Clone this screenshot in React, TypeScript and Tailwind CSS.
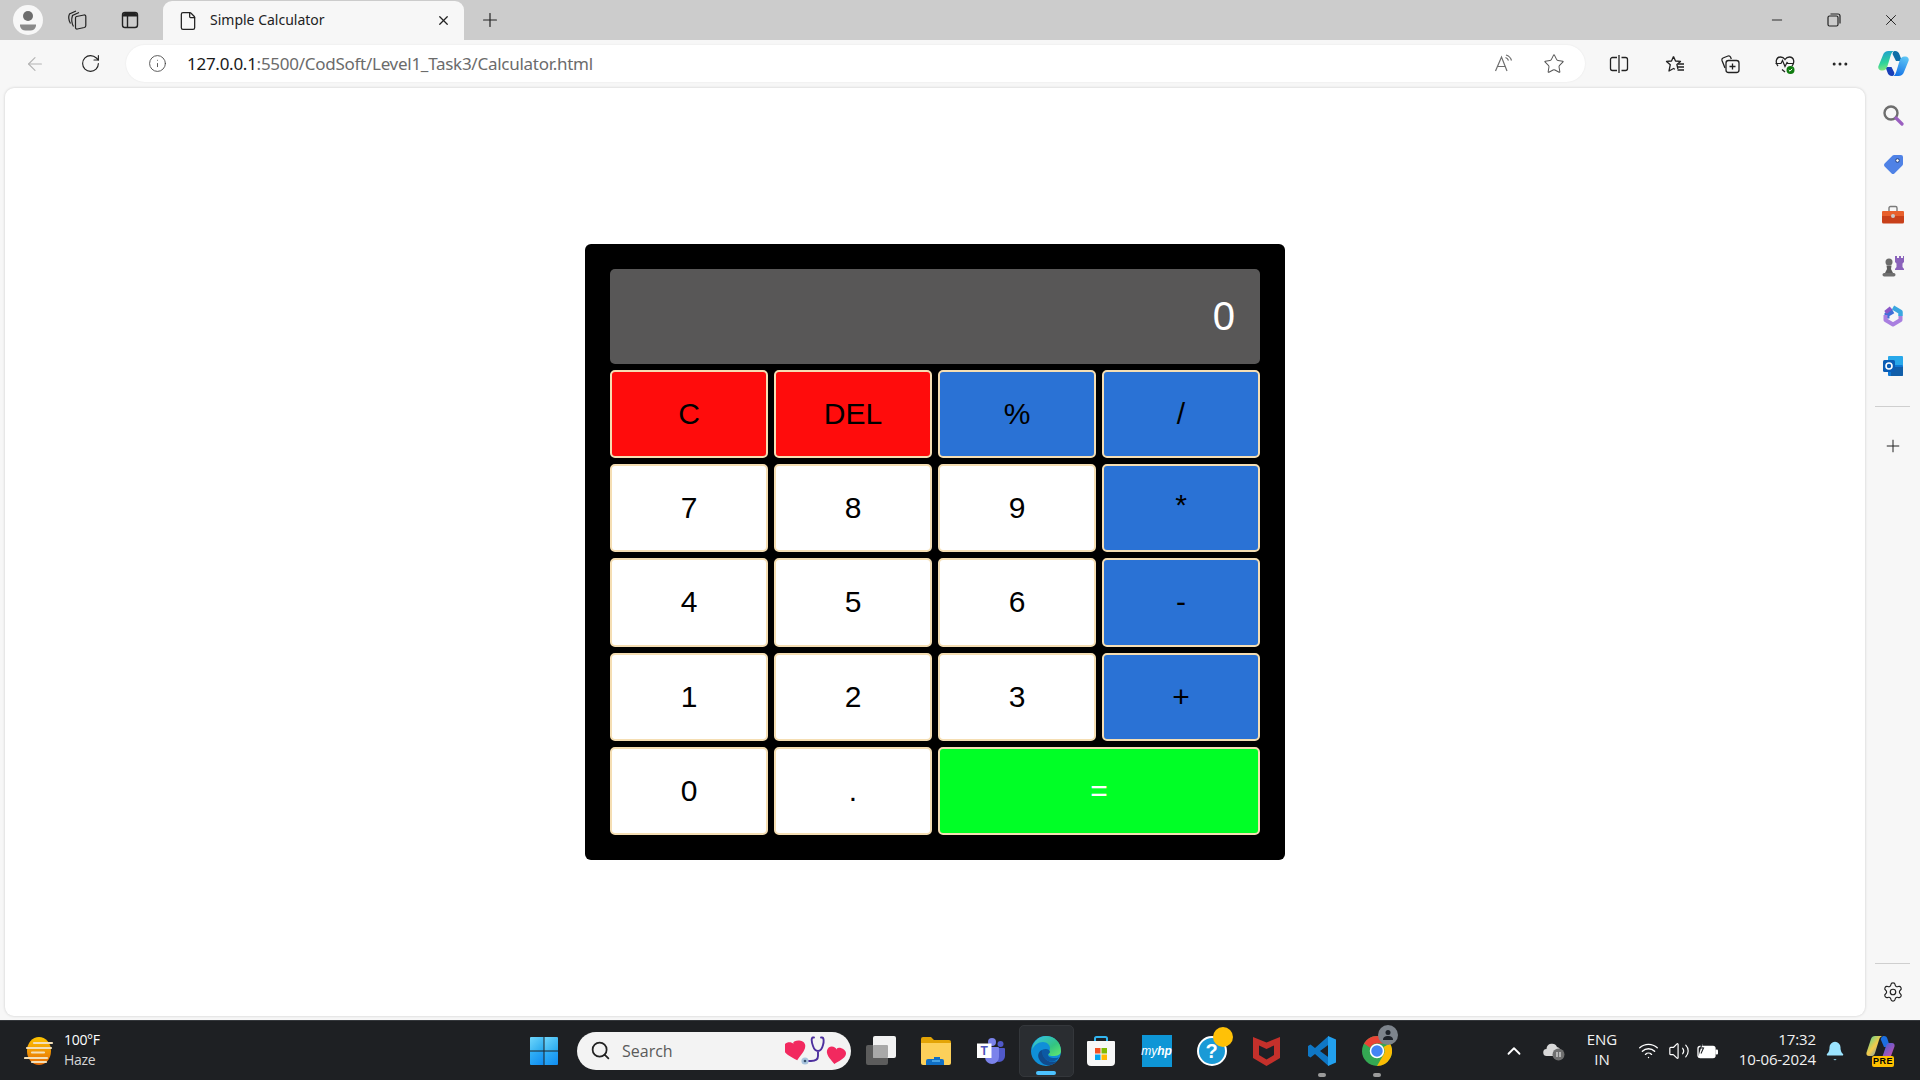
import React from 'react';
import { ArrowLeft, RotateCw, Info, Star, Plus, X, Minus, Settings, ChevronUp, Wifi, Volume2, Bell, Search, MoreHorizontal, File } from 'lucide-react';

const keyBase = 'flex items-center justify-center rounded-[5px] border-2 border-[#f5deb3] text-[30px] leading-none';

const keys = [
  { label: 'C', color: 'bg-[#ff0c0c] text-black' },
  { label: 'DEL', color: 'bg-[#ff0c0c] text-black' },
  { label: '%', color: 'bg-[#2a72d5] text-black' },
  { label: '/', color: 'bg-[#2a72d5] text-black' },
  { label: '7', color: 'bg-white text-black' },
  { label: '8', color: 'bg-white text-black' },
  { label: '9', color: 'bg-white text-black' },
  { label: '*', color: 'bg-[#2a72d5] text-black pb-[6px]' },
  { label: '4', color: 'bg-white text-black' },
  { label: '5', color: 'bg-white text-black' },
  { label: '6', color: 'bg-white text-black' },
  { label: '-', color: 'bg-[#2a72d5] text-black' },
  { label: '1', color: 'bg-white text-black' },
  { label: '2', color: 'bg-white text-black' },
  { label: '3', color: 'bg-white text-black' },
  { label: '+', color: 'bg-[#2a72d5] text-black' },
  { label: '0', color: 'bg-white text-black' },
  { label: '.', color: 'bg-white text-black' },
  { label: '=', color: 'bg-[#00ff26] text-white col-span-2' },
];

function Calculator() {
  return (
    <div className="w-[700px] h-[616px] bg-black rounded-[6px] pt-[25px] px-[25px] pb-[25px] flex flex-col gap-[6px] font-['Liberation_Sans',Arial,sans-serif]">
      <div className="h-[95px] bg-[#585757] rounded-[5px] flex items-center justify-end pr-[25px] pb-[2px] text-white text-[40px]">0</div>
      <div className="flex-1 grid grid-cols-4 grid-rows-5 gap-[6px]">
        {keys.map((k) => (
          <button key={k.label} className={`${keyBase} ${k.color}`}>{k.label}</button>
        ))}
      </div>
    </div>
  );
}

/* browser toolbar glyphs that the icon packages don't have */
function ProfileIcon() {
  return (
    <svg width="30" height="30" viewBox="0 0 30 30">
      <circle cx="15" cy="15" r="15" fill="#f7f7f7" />
      <circle cx="15" cy="11" r="5" fill="#6d6d6d" />
      <path d="M7 19.5h16v1.5a6 6 0 0 1-6 4.5h-4a6 6 0 0 1-6-4.5z" fill="#8a8a8a" />
    </svg>
  );
}

function CollectionsTabsIcon() {
  return (
    <svg width="22" height="22" viewBox="0 0 22 22" fill="none" stroke="#222" strokeWidth="1.2">
      <path d="M10.500 7.500 18 6a1.500 1.500 0 0 1 1.800 1.500v9a2 2 0 0 1-1.500 2L11.300 20a1.500 1.500 0 0 1-1.800-1.500V9a1.500 1.500 0 0 1 1-1.500z" />
      <path d="M7.500 17.500C5.500 14 5.500 9.500 6.500 6.500L13 3.500" />
      <path d="M4.500 14.500C2.500 11 2.500 7 3.500 5L10 2" />
    </svg>
  );
}

function VerticalTabsIcon() {
  return (
    <svg width="20" height="20" viewBox="0 0 20 20" fill="none">
      <rect x="2.5" y="2.5" width="15" height="15" rx="2.5" stroke="#222" strokeWidth="1.4" />
      <path d="M3 5a2 2 0 0 1 2-2h10a2 2 0 0 1 2 2v1.5H3z" fill="#222" />
      <path d="M7.5 6v11" stroke="#222" strokeWidth="1.4" />
    </svg>
  );
}

function RestoreIcon() {
  return (
    <svg width="14" height="14" viewBox="0 0 14 14" fill="none" stroke="#222" strokeWidth="1.2">
      <rect x="1" y="3" width="10" height="10" rx="1.5" />
      <path d="M3.5 1h7.5A2 2 0 0 1 13 3v7.5" />
    </svg>
  );
}

function ReadAloudIcon() {
  return (
    <svg width="20" height="20" viewBox="0 0 20 20" fill="none" stroke="#6e6e6e" strokeWidth="1.2">
      <path d="M1.5 17 7.5 3l5.5 14M3.5 12.5h8" />
      <path d="M11.5 3.5a5 5 0 0 1 3 3M12 1a8 8 0 0 1 5.5 5.5" />
    </svg>
  );
}

function SplitIcon() {
  return (
    <svg width="20" height="20" viewBox="0 0 20 20" fill="none" stroke="#222" strokeWidth="1.3">
      <path d="M8 3.5H3.5a2 2 0 0 0-2 2v9a2 2 0 0 0 2 2H8M12.500 3.500h4a2 2 0 0 1 2 2v9a2 2 0 0 1-2 2h-4M10 1v18" />
    </svg>
  );
}

function FavoritesIcon() {
  return (
    <svg width="22" height="22" viewBox="0 0 22 22" fill="none" stroke="#222" strokeWidth="1.3">
      <path d="M9.500 3.500 11.500 8l5 .4-3.600 3.100 1 4.500M9.500 3.500 7.500 8l-5 .4 3.800 3.300L5 18l4.500-2.500 1.500.8" strokeLinejoin="round" />
      <path d="M14 11h6M13.500 14h6.500M13.500 17h6.500" />
    </svg>
  );
}

function CollectionsIcon() {
  return (
    <svg width="22" height="22" viewBox="0 0 22 22" fill="none" stroke="#222" strokeWidth="1.3">
      <path d="M6 15 3 7.500a2 2 0 0 1 1-2.500l5-2a2 2 0 0 1 2.500 1l.8 2" />
      <rect x="7" y="7.500" width="13" height="12" rx="2.500" />
      <path d="M13.500 10.500v6M10.500 13.500h6" />
    </svg>
  );
}

function HealthIcon() {
  return (
    <svg width="22" height="22" viewBox="0 0 22 22">
      <path d="M4 13C1 9.500 2 4 6.500 4c2 0 3.500 1 4.500 2.500C12 5 13.500 4 15.500 4 20 4 21 9.500 18 13M8 16.500l3 2.500" fill="none" stroke="#222" strokeWidth="1.3" />
      <path d="M1.500 10.500H7l1.500-3 2.500 6 2-4 1 1h6" fill="none" stroke="#222" strokeWidth="1.200" />
      <circle cx="16.500" cy="17" r="4" fill="#107c10" />
      <path d="m14.800 17 1.200 1.200 2.200-2.400" fill="none" stroke="#fff" strokeWidth="1" />
    </svg>
  );
}

function CopilotIcon() {
  return (
    <svg width="31" height="27" viewBox="0 0 31 27">
      <defs>
        <linearGradient id="cpA" x1="0.3" y1="0" x2="0.5" y2="1">
          <stop offset="0" stopColor="#1f9fd0" />
          <stop offset="0.6" stopColor="#2fd39a" />
          <stop offset="1" stopColor="#8ee87a" />
        </linearGradient>
        <linearGradient id="cpB" x1="0.7" y1="0" x2="0.3" y2="1">
          <stop offset="0" stopColor="#5cc4f5" />
          <stop offset="1" stopColor="#1673e6" />
        </linearGradient>
      </defs>
      <path d="M17 1c2.500 0 3.800 1.500 4.500 3.500L24 11h-6l-3-6c-.8-1.500 0-4 2-4z" fill="#0f6fa8" />
      <path d="M14 26c-2.500 0-3.800-1.500-4.500-3.500L7.500 17h6l2.500 5c.8 1.500 0 4-2 4z" fill="#1a3fb8" />
      <path d="M10.500 1H17c-2.500 0-3.500 2-4.300 4.500L9.500 16c-1 3-2.500 4.500-5 4.500H3.500C1.200 20.500-.3 18.500.4 16.200L5 5c.8-2.500 3-4 5.500-4z" fill="url(#cpA)" />
      <path d="M20.500 26H14c2.500 0 3.500-2 4.300-4.500L21.500 11c1-3 2.500-4.500 5-4.500h1c2.300 0 3.800 2 3.100 4.300L26 22c-.8 2.500-3 4-5.500 4z" fill="url(#cpB)" />
    </svg>
  );
}

/* sidebar apps */
function MagnifierIcon() {
  return (
    <svg width="22" height="22" viewBox="0 0 22 22" fill="none">
      <circle cx="9" cy="9" r="6.500" stroke="#6e6e6e" strokeWidth="2.400" />
      <path d="m14 14 6 6" stroke="#9a5fc0" strokeWidth="3.200" strokeLinecap="round" />
    </svg>
  );
}

function TagIcon() {
  return (
    <svg width="22" height="22" viewBox="0 0 22 22">
      <path d="M12 1h7a2 2 0 0 1 2 2v7a2 2 0 0 1-.6 1.400l-8 8a2 2 0 0 1-2.800 0L2.600 12.400a2 2 0 0 1 0-2.800l8-8A2 2 0 0 1 12 1z" fill="#4f82e6" />
      <circle cx="15.500" cy="6.500" r="1.800" fill="#fff" stroke="#23407c" strokeWidth="1" />
    </svg>
  );
}

function ToolboxIcon() {
  return (
    <svg width="24" height="20" viewBox="0 0 24 20">
      <path d="M8 6V3a1.500 1.500 0 0 1 1.500-1.500h5A1.500 1.500 0 0 1 16 3v3" fill="none" stroke="#7a7a7a" strokeWidth="1.400" />
      <path d="M2 6h20a1 1 0 0 1 1 1v4H1V7a1 1 0 0 1 1-1z" fill="#e8602c" />
      <path d="M1 11h22v6a1.500 1.500 0 0 1-1.500 1.500h-19A1.500 1.500 0 0 1 1 17z" fill="#c8401a" />
      <circle cx="12" cy="11" r="2" fill="#c9c9c9" />
    </svg>
  );
}

function ChessIcon() {
  return (
    <svg width="24" height="24" viewBox="0 0 24 24">
      <path d="M14 2h2v2h2V2h2v2h2V2h1v6l-1.500 1.500V13l1.500 2v1H14v-1l1.500-2V9.500L14 8z" fill="#8a62bb" />
      <circle cx="8" cy="8" r="3.500" fill="#6c6c6c" />
      <path d="M5.500 11.500h5L10 15l2 4H4l2-4z" fill="#5c5c5c" />
      <rect x="1.500" y="19" width="13" height="3.500" rx="1.700" fill="#6f6f6f" />
    </svg>
  );
}

function M365Icon() {
  return (
    <svg width="22" height="24" viewBox="0 0 22 24" fill="none">
      <path d="M11 7 5 10.500v4" stroke="#3f6fd8" strokeWidth="5" />
      <path d="M11 3.500 18.500 8v4" stroke="#3aa6e0" strokeWidth="4.500" strokeLinejoin="round" />
      <path d="M3.500 8.500 9 4" stroke="#8a56c8" strokeWidth="4" />
      <path d="M18.500 12v4L11 20.500 3.500 16v-5" stroke="#a97fe0" strokeWidth="4" strokeLinejoin="round" />
    </svg>
  );
}

function OutlookIcon() {
  return (
    <svg width="22" height="22" viewBox="0 0 22 22">
      <rect x="6" y="1" width="15" height="10" rx="1" fill="#28a8ea" />
      <rect x="6" y="10" width="15" height="11" rx="1" fill="#0f78d4" />
      <path d="M9 12h12v9H9z" fill="#14447d" opacity=".5" />
      <rect x="1" y="5" width="12" height="12" rx="1.500" fill="#0b5db5" />
      <circle cx="7" cy="11" r="3" fill="none" stroke="#fff" strokeWidth="1.600" />
    </svg>
  );
}

/* taskbar */
function WeatherIcon() {
  return (
    <svg width="32" height="32" viewBox="0 0 32 32">
      <defs>
        <linearGradient id="sun" x1="0" y1="0" x2="0" y2="1">
          <stop offset="0" stopColor="#fdc400" />
          <stop offset="1" stopColor="#e56a08" />
        </linearGradient>
      </defs>
      <ellipse cx="15" cy="16" rx="12" ry="14" fill="url(#sun)" />
      <path d="M10 9h18M3 14h24M8 18.500h12M1 24h22M8 28h14" stroke="#f3dfb8" strokeWidth="2.200" strokeLinecap="round" transform="translate(0 -1)" />
    </svg>
  );
}

function WindowsIcon() {
  return (
    <svg width="30" height="30" viewBox="0 0 30 30">
      <defs>
        <linearGradient id="winT" x1="0" y1="0" x2="1" y2="1">
          <stop offset="0" stopColor="#6fd6fb" />
          <stop offset="1" stopColor="#26a8ee" />
        </linearGradient>
        <linearGradient id="winB" x1="0" y1="0" x2="1" y2="1">
          <stop offset="0" stopColor="#34b3f6" />
          <stop offset="1" stopColor="#0f8bf0" />
        </linearGradient>
      </defs>
      <path d="M1 2a1 1 0 0 1 1-1h12.500v13.500H1z" fill="url(#winT)" />
      <path d="M15.500 1H28a1 1 0 0 1 1 1v12.500H15.500z" fill="url(#winT)" />
      <path d="M1 15.500h13.500V29H2a1 1 0 0 1-1-1z" fill="url(#winB)" />
      <path d="M15.500 15.500H29V28a1 1 0 0 1-1 1H15.500z" fill="url(#winB)" />
    </svg>
  );
}

function StethoscopeHearts() {
  const heart = 'M0-6C-2.500-10.500-11-10-11-3-11 2.500-3.500 7 0 10.500 3.500 7 11 2.500 11-3 11-10-2.500-10.500 0-6Z';
  return (
    <svg width="64" height="34" viewBox="0 0 64 34" fill="none">
      <path d={heart} transform="translate(10 16) rotate(-12)" fill="#f2295f" />
      <path d={heart} transform="translate(51 21) rotate(10) scale(.88)" fill="#f2295f" />
      <path d="M29 3.500H28C26 3.500 26.500 8 28 12 29 15 31 17 33 17 35 17 37 15 38 11 39 8 39 3.500 37 3.500H36M33 17V22C33 26 29 27 26 27H22" stroke="#4d2f9e" strokeWidth="1.900" strokeLinecap="round" />
      <circle cx="20" cy="27" r="3.600" fill="#a9c4de" />
      <circle cx="20" cy="27" r="1.300" fill="#35506e" />
    </svg>
  );
}

function TaskViewIcon() {
  return (
    <svg width="30" height="30" viewBox="0 0 30 30">
      <rect x="0" y="9" width="22" height="20" rx="2" fill="#5c5c5c" />
      <rect x="7" y="0" width="23" height="22" rx="2" fill="#f2f2f2" />
      <rect x="7" y="9" width="15" height="13" rx="1" fill="#a8a8a8" />
    </svg>
  );
}

function ExplorerIcon() {
  return (
    <svg width="30" height="28" viewBox="0 0 30 28">
      <path d="M0 2a2 2 0 0 1 2-2h8l3 3h15a2 2 0 0 1 2 2v5H0z" fill="#e3a406" />
      <path d="M0 6h30v20a2 2 0 0 1-2 2H2a2 2 0 0 1-2-2z" fill="#fcd05a" />
      <path d="M5 28v-4a2 2 0 0 1 2-2h6v-2h6v2h0a2 2 0 0 1 1 0h1a2 2 0 0 1 2 2v4z" fill="#0f6fc6" />
      <path d="M11 24h8" stroke="#58b4f2" strokeWidth="1.500" />
    </svg>
  );
}

function TeamsIcon() {
  return (
    <svg width="28" height="26" viewBox="0 0 28 26">
      <circle cx="15" cy="4" r="4" fill="#7b83eb" />
      <circle cx="23.500" cy="6" r="3" fill="#5059c9" />
      <path d="M19 10h8a1 1 0 0 1 1 1v7a6 6 0 0 1-6 6c-2 0-3-1-3-1z" fill="#5059c9" />
      <path d="M8 9h13a1 1 0 0 1 1 1v9a7 7 0 0 1-14 0z" fill="#7b83eb" />
      <rect x="0" y="5.500" width="14.500" height="14.500" fill="#fff" />
      <text x="7.200" y="17" textAnchor="middle" fill="#4b53bc" fontSize="12" fontWeight="700" fontFamily="'Liberation Sans',sans-serif">T</text>
    </svg>
  );
}

function EdgeIcon() {
  return (
    <svg width="30" height="30" viewBox="0 0 30 30">
      <defs>
        <linearGradient id="edgeG" x1="0" y1="0" x2="1" y2="1">
          <stop offset="0" stopColor="#35c1f1" />
          <stop offset="0.6" stopColor="#33c481" />
          <stop offset="1" stopColor="#66eb6e" />
        </linearGradient>
      </defs>
      <circle cx="15" cy="15" r="15" fill="#0f8fd8" />
      <path d="M1 14C2 5 8 0 15 0c8 0 15 6 15 15 0 4-4 5-8 5-4 0-5-1-5-3 0-2 2-2 2-5 0-3-3-6-7-6C7 6 3 9 1 14z" fill="url(#edgeG)" />
      <path d="M11 14c-3 1-5 5-3 9 2 4 6 7 11 6 3-.5 6-2 7.500-4.500-2 1.200-6 2-9 .5-4-2-6-6-6.500-11z" fill="#114a8b" />
      <path d="M11 14c3-2 8-1 8 2 0 1-2 2-2 3 0 2 3 3 6 3 2 0 4 0 5-1-2 4-7 6-11 4-4-2-7-7-6-11z" fill="#0c59a4" />
    </svg>
  );
}

function StoreIcon() {
  return (
    <svg width="30" height="32" viewBox="0 0 30 32">
      <path d="M9 8V3.500A1.500 1.500 0 0 1 10.500 2h9A1.500 1.500 0 0 1 21 3.500V8" fill="none" stroke="#32b5f0" strokeWidth="2" />
      <path d="M2 6h26a1 1 0 0 1 1 1v20a4 4 0 0 1-4 4H5a4 4 0 0 1-4-4V7a1 1 0 0 1 1-1z" fill="#f7f7f7" />
      <rect x="9" y="13" width="5.500" height="5.500" fill="#f25022" />
      <rect x="15.500" y="13" width="5.500" height="5.500" fill="#7fba00" />
      <rect x="9" y="19.500" width="5.500" height="5.500" fill="#00a4ef" />
      <rect x="15.500" y="19.500" width="5.500" height="5.500" fill="#ffb900" />
    </svg>
  );
}

function HelpIcon() {
  return (
    <div className="relative w-[30px] h-[30px] rounded-full bg-[#1a9ad6] border-[2px] border-white flex items-center justify-center text-white font-bold text-[20px] leading-none font-['Liberation_Sans',sans-serif]">
      ?
      <span className="absolute -top-[11px] left-[14px] w-[20px] h-[20px] rounded-full bg-[#ffc107]" />
    </div>
  );
}

function McAfeeIcon() {
  return (
    <svg width="27" height="31" viewBox="0 0 27 31">
      <path d="M0 2 13.500 7.500 27 2v21L13.500 31 0 23z" fill="#c4302b" />
      <path d="M6 10.500 13.500 14 21 10.500V20l-7.500 4.500L6 20z" fill="#1c2026" />
    </svg>
  );
}

function VscodeIcon() {
  return (
    <svg width="30" height="32" viewBox="0 0 30 32">
      <path d="M21.500 1 8 13 3.500 9.500 1 11v10l2.500 1.500L8 19l13.500 12 1-8L13 16l9.500-7z" fill="#0f77c5" />
      <path d="M21 1 29 4.500v23L21 31z" fill="#22a0ee" />
    </svg>
  );
}

function ChromeIcon() {
  return (
    <div className="relative w-[30px] h-[30px]">
      <svg width="30" height="30" viewBox="0 0 30 30">
        <circle cx="15" cy="15" r="15" fill="#34a853" />
        <path d="M15 0a15 15 0 0 1 13 7.500H15a7.500 7.500 0 0 0-6.800 4.300L2 7.500A15 15 0 0 1 15 0z" fill="#ea4335" />
        <path d="M28 7.500A15 15 0 0 1 15 30l6.500-11.200A7.500 7.500 0 0 0 21.500 11z" fill="#fbbc04" />
        <circle cx="15" cy="15" r="6.500" fill="#4285f4" stroke="#fff" strokeWidth="1.500" />
      </svg>
      <span className="absolute -top-[11px] left-[16px] w-[20px] h-[20px] rounded-full bg-[#7d848c] flex items-center justify-center">
        <svg width="12" height="12" viewBox="0 0 12 12" fill="#1d2229">
          <circle cx="6" cy="3.500" r="2.500" />
          <path d="M1 11c0-3 2-4 5-4s5 1 5 4z" />
        </svg>
      </span>
    </div>
  );
}

function CloudPausedIcon() {
  return (
    <svg width="22" height="20" viewBox="0 0 22 20">
      <path d="M4 15a3.500 3.500 0 0 1-.5-7A5.500 5.500 0 0 1 14 6a4 4 0 0 1 3 6H14v3z" fill="#d8d8d8" />
      <circle cx="15.500" cy="13.500" r="6" fill="#6f6f6f" />
      <path d="M14 11v5M17 11v5" stroke="#e4e4e4" strokeWidth="1.200" />
    </svg>
  );
}

function BatteryIcon() {
  return (
    <svg width="22" height="18" viewBox="0 0 22 18" fill="none">
      <rect x="1" y="4.500" width="17" height="11" rx="2" stroke="#fff" strokeWidth="1.300" />
      <rect x="18.500" y="7.500" width="2.500" height="5" rx="1" fill="#fff" />
      <path d="M1 15.500 4 6l3-1h10a1 1 0 0 1 1 1v8.500a1 1 0 0 1-1 1z" fill="#fff" />
      <path d="M6 0 3.500 6h3L4 11.500" stroke="#202327" strokeWidth="1.100" fill="#fff" />
    </svg>
  );
}

function PreCopilotIcon() {
  return (
    <div className="relative w-[30px] h-[32px]">
      <svg width="30" height="26" viewBox="0 0 30 26">
        <defs>
          <linearGradient id="preA" x1="0" y1="0" x2="1" y2="1">
            <stop offset="0" stopColor="#3ad8a0" />
            <stop offset="0.5" stopColor="#f7c948" />
            <stop offset="1" stopColor="#2a8ae8" />
          </linearGradient>
          <linearGradient id="preB" x1="0" y1="0" x2="1" y2="1">
            <stop offset="0" stopColor="#2266e0" />
            <stop offset="1" stopColor="#e64aa6" />
          </linearGradient>
        </defs>
        <path d="M9 1h8c-2 0-3 1-4 4L9 18c-.7 2.500-2 3-4 3H3c-2 0-3-1.500-2.500-3.500L5 4c.6-2 2-3 4-3z" fill="url(#preA)" />
        <path d="M18 1c2 0 3 1 3.500 3L24 12h-6l-3-7c-.6-1.500 1-4 3-4z" fill="#1c6fe0" />
        <path d="M21 24h-8c2 0 3-1 4-4l3-9c.8-2.500 2-3 4-3h2c2 0 3 1.500 2.500 3.500L25 21c-.6 2-2 3-4 3z" fill="url(#preB)" />
      </svg>
      <span className="absolute left-[6px] bottom-0 w-[22px] h-[11px] rounded-[2px] bg-[#ffc000] text-black text-[9px] leading-[11px] font-bold text-center tracking-[0.5px] font-['Liberation_Sans',sans-serif]">PRE</span>
    </div>
  );
}

const sidebarApps = [
  <MagnifierIcon key="search" />,
  <TagIcon key="tag" />,
  <ToolboxIcon key="tools" />,
  <ChessIcon key="games" />,
  <M365Icon key="m365" />,
  <OutlookIcon key="outlook" />,
];

const pinned = [
  { id: 'taskview', icon: <TaskViewIcon /> },
  { id: 'explorer', icon: <ExplorerIcon /> },
  { id: 'teams', icon: <TeamsIcon /> },
  { id: 'edge', icon: <EdgeIcon />, active: true },
  { id: 'store', icon: <StoreIcon /> },
  { id: 'hp', icon: <div className="w-[30px] h-[32px] bg-[#0e96d6] flex items-center justify-center text-white text-[12px] italic font-['Liberation_Sans',sans-serif]">my<b>hp</b></div> },
  { id: 'help', icon: <HelpIcon /> },
  { id: 'mcafee', icon: <McAfeeIcon /> },
  { id: 'vscode', icon: <VscodeIcon />, running: true },
  { id: 'chrome', icon: <ChromeIcon />, running: true },
];

export default function App() {
  return (
    <div className="w-[1920px] h-[1080px] overflow-hidden flex flex-col bg-[#f7f7f7] font-['Noto_Sans','Open_Sans',sans-serif]">
      {/* Tab strip */}
      <div className="h-[40px] bg-[#cccccc] flex items-center shrink-0">
        <div className="w-[56px] flex justify-center"><ProfileIcon /></div>
        <div className="w-[42px] flex justify-center"><CollectionsTabsIcon /></div>
        <div className="w-[64px] flex justify-center mr-[1px]"><VerticalTabsIcon /></div>
        <div className="w-[301px] h-[39px] mt-[1px] self-start bg-[#f7f7f7] rounded-t-[9px] flex items-center pl-[15px] pr-[13px]">
          <File size={20} strokeWidth={1.5} className="text-[#222]" />
          <span className="ml-[12px] pb-[2px] text-[14px] text-[#222]">Simple Calculator</span>
          <X size={15} strokeWidth={2} className="ml-auto text-[#222]" />
        </div>
        <div className="ml-[15px]"><Plus size={22} strokeWidth={1.3} className="text-[#222]" /></div>
        <div className="ml-auto flex items-center text-[#222]">
          <div className="w-[57px] flex justify-center"><Minus size={16} strokeWidth={1.4} /></div>
          <div className="w-[57px] flex justify-center"><RestoreIcon /></div>
          <div className="w-[58px] flex justify-center"><X size={18} strokeWidth={1.3} /></div>
        </div>
      </div>

      {/* Address bar row */}
      <div className="h-[48px] flex items-center shrink-0 pb-[1px]">
        <div className="w-[70px] flex justify-center"><ArrowLeft size={22} strokeWidth={1.2} className="text-[#b3b3b3]" /></div>
        <div className="w-[40px] flex justify-center"><RotateCw size={21} strokeWidth={1.3} className="text-[#222]" /></div>
        <div className="ml-[16px] w-[1459px] h-[37px] bg-white rounded-full flex items-center shadow-[0_0_2px_rgba(0,0,0,0.08)]">
          <Info size={19} strokeWidth={1.1} className="ml-[22px] text-[#444]" />
          <span className="ml-[20px] text-[17px] tracking-[-0.27px] text-[#1a1a1a]">
            127.0.0.1<span className="text-[#6b6b6b]">:5500/CodSoft/Level1_Task3/Calculator.html</span>
          </span>
          <div className="ml-auto flex items-center">
            <div className="w-[50px] flex justify-center"><ReadAloudIcon /></div>
            <div className="w-[50px] flex justify-center mr-[6px]"><Star size={22} strokeWidth={1.1} className="text-[#555]" /></div>
          </div>
        </div>
        <div className="w-[68px] flex justify-center"><SplitIcon /></div>
        <div className="w-[55px] -ml-[6px] flex justify-center"><FavoritesIcon /></div>
        <div className="w-[55px] flex justify-center"><CollectionsIcon /></div>
        <div className="w-[55px] flex justify-center"><HealthIcon /></div>
        <div className="w-[55px] flex justify-center"><MoreHorizontal size={20} strokeWidth={1.6} className="text-[#222]" /></div>
        <div className="w-[52px] flex justify-center"><CopilotIcon /></div>
      </div>

      {/* Page + sidebar */}
      <div className="flex-1 flex min-h-0">
        <div className="ml-[5px] w-[1860px] h-[928px] bg-white rounded-[9px] shadow-[0_0_3px_rgba(0,0,0,0.18)] flex items-center justify-center">
          <Calculator />
        </div>
        <div className="w-[55px] flex flex-col items-center">
          <div className="flex flex-col items-center pt-[2px]">
            {sidebarApps.map((icon) => (
              <div key={icon.key} className="h-[50.200px] flex items-center justify-center">{icon}</div>
            ))}
          </div>
          <div className="w-[35px] h-px bg-[#cfcfcf] mt-[15px]" />
          <div className="mt-[29px]"><Plus size={20} strokeWidth={1.2} className="text-[#222]" /></div>
          <div className="mt-auto w-[35px] h-px bg-[#cfcfcf]" />
          <div className="mt-[17px] mb-[17px]"><Settings size={22} strokeWidth={1.3} className="text-[#222]" /></div>
        </div>
      </div>

      {/* Windows taskbar */}
      <div className="h-[60px] shrink-0 bg-[#1e2023] border-t border-[#34373b] flex items-center text-white font-['Open_Sans','Noto_Sans',sans-serif]">
        <div className="w-[526px] flex items-center pl-[24px]">
          <WeatherIcon />
          <div className="ml-[8px] pb-[2px] flex flex-col text-[14px] leading-[20px]">
            <span className="tracking-[-0.3px]">100°F</span>
            <span className="text-[#d5d5d5] tracking-[-0.3px]">Haze</span>
          </div>
        </div>
        <div className="w-[36px] flex justify-center mr-[15px]"><WindowsIcon /></div>
        <div className="w-[274px] h-[38px] rounded-full bg-[#f3f3f3] flex items-center pl-[13px] text-[#5a5a5a]">
          <Search size={21} strokeWidth={2} className="text-[#222]" />
          <span className="ml-[11px] text-[16px]">Search</span>
          <div className="ml-auto mr-[2px]"><StethoscopeHearts /></div>
        </div>
        <div className="flex items-center ml-[2px]">
          {pinned.map((p) => (
            <div
              key={p.id}
              className={`relative w-[55.200px] h-[52px] flex items-center justify-center rounded-[5px] ${p.active ? 'bg-[#2a2d31] border border-[#34373b]' : ''}`}
            >
              {p.icon}
              {p.active && <span className="absolute bottom-[1px] left-1/2 -translate-x-1/2 w-[20px] h-[4px] rounded-full bg-[#4cc2ff]" />}
              {p.running && <span className="absolute bottom-0 left-1/2 -translate-x-1/2 w-[8px] h-[4px] rounded-full bg-[#9b9b9b]" />}
            </div>
          ))}
        </div>
        <div className="ml-auto flex items-center pr-[24px]">
          <ChevronUp size={22} strokeWidth={2} />
          <div className="ml-[18px]"><CloudPausedIcon /></div>
          <div className="ml-[16px] w-[42px] pb-[3px] text-center text-[15px] leading-[20px] text-[#f2f2f2]">ENG<br />IN</div>
          <div className="ml-[15px]"><Wifi size={21} strokeWidth={1.6} /></div>
          <div className="ml-[9px]"><Volume2 size={22} strokeWidth={1.3} /></div>
          <div className="ml-[7px]"><BatteryIcon /></div>
          <div className="ml-[8px] w-[89px] pb-[3px] text-right text-[15px] leading-[20px] tracking-[-0.1px] text-[#f2f2f2]">17:32<br />10-06-2024</div>
          <div className="ml-[8px]"><Bell size={22} fill="#9be4ff" strokeWidth={0} /></div>
          <div className="ml-[20px]"><PreCopilotIcon /></div>
        </div>
      </div>
    </div>
  );
}
